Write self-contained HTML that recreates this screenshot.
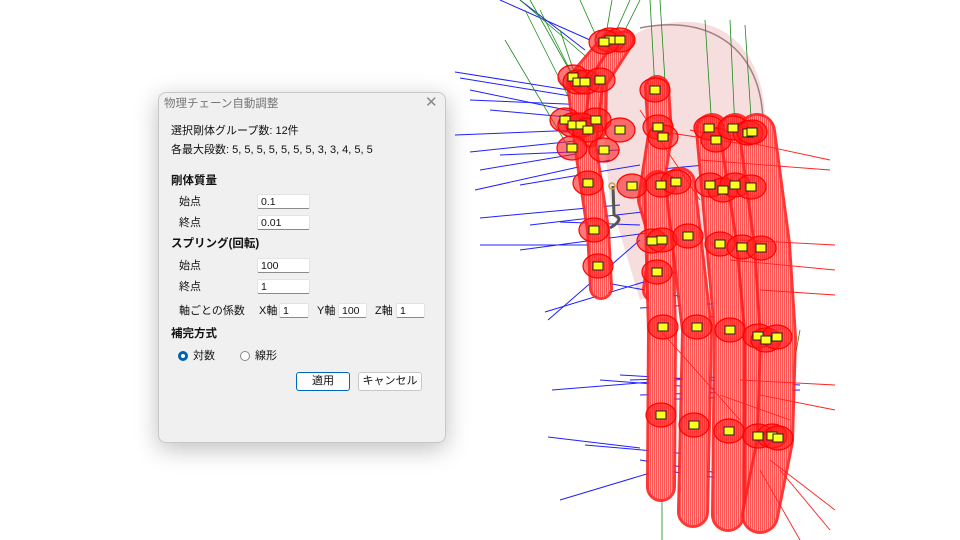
<!DOCTYPE html>
<html><head><meta charset="utf-8">
<style>
html,body{margin:0;padding:0;width:960px;height:540px;background:#fff;overflow:hidden;font-family:"Liberation Sans","Noto Sans CJK JP",sans-serif;}
#scene{position:absolute;left:0;top:0}
.dlg{position:absolute;left:158px;top:92px;width:286px;height:349px;background:#f0f0f0;border:1px solid #c8c8c8;border-radius:8px;box-shadow:0 6px 24px rgba(0,0,0,0.25);font-size:11px;color:#111;}
.t{position:absolute;white-space:nowrap;line-height:14px}
.title{left:5px;top:4px;color:#777;font-size:11.5px}
.x{left:266px;top:3px;color:#888;font-size:15px}
.b{font-weight:bold;font-size:11.5px}
.in{position:absolute;background:#fff;border:1px solid #e3e3e3;border-bottom:1px solid #8a8a8a;height:15px;box-sizing:border-box;font-size:10.5px;line-height:14px;padding-left:3px;border-radius:2px}
.rad{position:absolute;width:10px;height:10px;border-radius:50%;box-sizing:border-box}
.btn{position:absolute;height:19px;box-sizing:border-box;border:1px solid #c8c8c8;background:#fdfdfd;border-radius:3px;text-align:center;line-height:17px;font-size:11px}
</style></head><body>
<svg id="scene" width="960" height="540" xmlns="http://www.w3.org/2000/svg">
<defs>
<pattern id="wf" width="2" height="6" patternUnits="userSpaceOnUse">
<rect width="2" height="6" fill="rgba(245,160,160,0.5)"/>
<line x1="0.5" y1="0" x2="0.5" y2="6" stroke="#ff1a1a" stroke-width="0.6"/>
</pattern>
</defs>
<g id="g"></g>
</svg>
<div class="dlg">
<div class="t title">物理チェーン自動調整</div>
<div class="t x">✕</div>
<div class="t" style="left:12px;top:31px">選択剛体グループ数: 12件</div>
<div class="t" style="left:12px;top:50px">各最大段数: 5, 5, 5, 5, 5, 5, 5, 3, 3, 4, 5, 5</div>
<div class="t b" style="left:12px;top:81px">剛体質量</div>
<div class="t" style="left:20px;top:102px">始点</div>
<div class="in" style="left:98px;top:101px;width:53px">0.1</div>
<div class="t" style="left:20px;top:123px">終点</div>
<div class="in" style="left:98px;top:122px;width:53px">0.01</div>
<div class="t b" style="left:12px;top:144px">スプリング(回転)</div>
<div class="t" style="left:20px;top:166px">始点</div>
<div class="in" style="left:98px;top:165px;width:53px">100</div>
<div class="t" style="left:20px;top:187px">終点</div>
<div class="in" style="left:98px;top:186px;width:53px">1</div>
<div class="t" style="left:20px;top:211px">軸ごとの係数</div>
<div class="t" style="left:100px;top:211px">X軸</div>
<div class="in" style="left:120px;top:210px;width:30px">1</div>
<div class="t" style="left:158px;top:211px">Y軸</div>
<div class="in" style="left:179px;top:210px;width:29px">100</div>
<div class="t" style="left:216px;top:211px">Z軸</div>
<div class="in" style="left:237px;top:210px;width:29px">1</div>
<div class="t b" style="left:12px;top:234px">補完方式</div>
<div class="rad" style="left:19px;top:258px;border:3px solid #0063b1;background:#fff"></div>
<div class="t" style="left:34px;top:256px">対数</div>
<div class="rad" style="left:81px;top:258px;border:1px solid #888;background:#fff"></div>
<div class="t" style="left:96px;top:256px">線形</div>
<div class="btn" style="left:137px;top:279px;width:54px;border-color:#0067c0">適用</div>
<div class="btn" style="left:199px;top:279px;width:64px">キャンセル</div>
</div>
<script>
var g=document.getElementById('g'),NS='http://www.w3.org/2000/svg';
function el(n,a){var e=document.createElementNS(NS,n);for(var k in a)e.setAttribute(k,a[k]);g.appendChild(e);return e;}
el('path',{d:'M600 95 C600 40 650 20 690 22 C740 24 765 70 765 120 L768 250 L640 300 L610 200 Z',fill:'rgba(240,195,195,0.55)',stroke:'none'});
el('path',{d:'M640 28 C700 15 760 40 763 120',fill:'none',stroke:'#a08080','stroke-width':1.5});
var blue=[[455,72,600,95],[460,78,595,100],[470,100,590,105],[455,135,580,130],[470,152,585,140],[480,170,600,150],[475,190,610,160],[520,185,640,165],[480,218,620,205],[530,225,660,210],[480,245,600,245],[520,250,670,230],[548,320,640,240],[545,312,700,265],[590,280,700,300],[548,437,640,448],[585,445,700,455],[552,390,700,378],[600,380,760,392],[620,375,800,385],[650,400,790,395],[560,500,660,470],[640,308,780,300],[650,170,760,160],[500,0,590,40],[520,0,585,50],[470,90,590,115],[490,110,600,120],[500,155,620,150],[560,222,640,225],[630,380,780,375],[640,395,800,390],[640,460,760,480],[660,470,770,485],[680,320,780,310]];
blue.forEach(function(l){el('line',{x1:l[0],y1:l[1],x2:l[2],y2:l[3],stroke:'#2020ff','stroke-width':1});});
var green=[[520,0,590,60],[530,0,575,80],[540,10,580,90],[580,0,600,45],[612,0,605,40],[630,0,612,40],[640,0,620,40],[560,30,590,120],[650,0,655,90],[660,0,668,130],[705,20,712,130],[730,20,735,130],[745,25,752,132],[662,340,662,540],[700,340,695,510],[790,330,775,440],[800,330,780,440],[592,160,600,290],[505,40,570,150],[525,10,575,110]];
green.forEach(function(l){el('line',{x1:l[0],y1:l[1],x2:l[2],y2:l[3],stroke:'#1a8a1a','stroke-width':0.8});});
var F=[[[612,42],[578,82],[586,150],[598,230],[601,288]],22,[[625,40],[598,82],[597,130]],18,[[657,88],[660,135],[650,200],[662,242],[655,290]],24,[[596,85],[590,140]],14,[[658,185],[662,330],[661,487]],28,[[680,183],[697,330],[693,512]],30,[[712,130],[730,330],[728,515]],32,[[735,130],[752,240],[760,330],[760,505]],32,[[757,132],[772,245],[778,338],[775,440],[760,515]],36];
for(var i=0;i<F.length;i+=2){var p=F[i].map(function(q){return q.join(' ')}).join(' L ');
el('path',{d:'M '+p,fill:'none',stroke:'#ff2020','stroke-width':F[i+1]+2,'stroke-linecap':'round','stroke-linejoin':'round','stroke-opacity':0.9});
el('path',{d:'M '+p,fill:'none',stroke:'rgba(248,180,180,0.95)','stroke-width':F[i+1]-4,'stroke-linecap':'round','stroke-linejoin':'round'});
el('path',{d:'M '+p,fill:'none',stroke:'url(#wf)','stroke-width':F[i+1]-4,'stroke-linecap':'round','stroke-linejoin':'round'});}
var red=[[690,130,830,160],[700,160,830,170],[740,240,835,245],[730,260,835,270],[760,290,835,295],[740,380,835,385],[760,395,835,410],[770,460,835,510],[780,470,830,530],[760,470,800,540],[650,130,750,145],[640,110,700,200],[660,330,740,420],[720,395,790,420]];
red.forEach(function(l){el('line',{x1:l[0],y1:l[1],x2:l[2],y2:l[3],stroke:'#ff2020','stroke-width':0.9});});
var S=[[610,40],[620,40],[604,42],[573,77],[578,82],[585,82],[600,80],[596,120],[565,120],[573,125],[581,125],[588,130],[572,148],[588,183],[594,230],[598,266],[655,90],[658,127],[663,137],[709,128],[716,140],[733,128],[748,133],[752,132],[632,186],[661,185],[676,182],[710,185],[723,190],[735,185],[751,187],[652,241],[662,240],[688,236],[720,244],[742,247],[761,248],[657,272],[663,327],[697,327],[730,330],[758,336],[766,340],[777,337],[661,415],[694,425],[729,431],[758,436],[772,436],[778,438],[604,150],[620,130]];
S.forEach(function(s){el('ellipse',{cx:s[0],cy:s[1],rx:15,ry:12,fill:'rgba(255,30,30,0.6)',stroke:'#ff0000','stroke-width':1.2});});
S.forEach(function(s){el('rect',{x:s[0]-5,y:s[1]-4,width:10,height:8,fill:'#ffff20',stroke:'#222','stroke-width':1});});
el('path',{d:'M613 186 L614 215 M610 228 C620 222 622 218 614 215',fill:'none',stroke:'#555','stroke-width':3});
el('circle',{cx:612,cy:186,r:3,fill:'none',stroke:'#c8a040','stroke-width':1.5});
</script>
</body></html>
